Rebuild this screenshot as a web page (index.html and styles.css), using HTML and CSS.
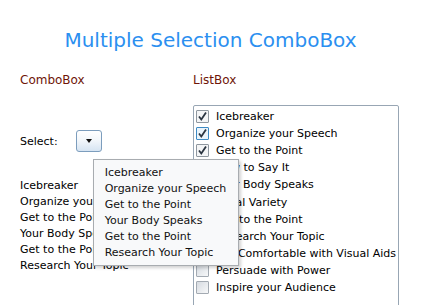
FILE: index.html
```html
<!DOCTYPE html>
<html lang="en">
  <head>
    <meta charset="UTF-8" />
    <title>Multiple Selection ComboBox</title>
    <link rel="stylesheet" href="styles.css">
  </head>
  <body>
    <h1 class="title">Multiple Selection ComboBox</h1>
    <div class="columns">
      <div class="col">
        <div class="label">ComboBox</div>
        <div class="combo-row">
          <span>Select:</span>
          <div class="combo">
            <button class="combo-btn"><span class="arrow"></span></button>
            <ul class="popup">
              <li>Icebreaker</li>
              <li>Organize your Speech</li>
              <li>Get to the Point</li>
              <li>Your Body Speaks</li>
              <li>Get to the Point</li>
              <li>Research Your Topic</li>
            </ul>
          </div>
        </div>
        <ul class="selected">
          <li>Icebreaker</li>
          <li>Organize your Speech</li>
          <li>Get to the Point</li>
          <li>Your Body Speaks</li>
          <li>Get to the Point</li>
          <li>Research Your Topic</li>
        </ul>
      </div>
      <div class="col">
        <div class="label">ListBox</div>
        <ul class="listbox" id="listbox"></ul>
      </div>
    </div>
    <script>
      const items = [
        ["Icebreaker", true],
        ["Organize your Speech", true, true],
        ["Get to the Point", true],
        ["How to Say It", false],
        ["Your Body Speaks", false],
        ["Vocal Variety", false],
        ["Get to the Point", false],
        ["Research Your Topic", false],
        ["Get Comfortable with Visual Aids", false],
        ["Persuade with Power", false],
        ["Inspire your Audience", false],
      ];
      const check =
        '<svg width="11" height="11" viewBox="0 0 11 11"><path d="M2 5.5 L4.3 8.5 L9 1.5" fill="none" stroke="#2a3440" stroke-width="1.8"/></svg>';
      document.getElementById("listbox").innerHTML = items
        .map(
          ([text, on, hover]) => `
          <li>
            <span class="box${on ? " on" : ""}${hover ? " hover" : ""}">${on ? check : ""}</span>
            <span>${text}</span>
          </li>`
        )
        .join("");
    </script>
  </body>
</html>
```

FILE: styles.css
```css
* {
  box-sizing: border-box;
  margin: 0;
  padding: 0;
}
body {
  font-family: "DejaVu Sans", Verdana, sans-serif;
  font-size: 11px;
  color: #000;
  background: #fff;
  overflow: hidden;
}
ul {
  list-style: none;
}
.title {
  font-size: 20px;
  font-weight: normal;
  line-height: 24px;
  color: #2b8ff0;
  text-align: center;
  padding-top: 28px;
}
.columns {
  display: grid;
  grid-template-columns: 173px 206px;
  padding-left: 20px;
  margin-top: 20px;
}
.label {
  font-size: 12px;
  line-height: 17px;
  color: #6f1508;
}
.combo-row {
  display: flex;
  align-items: center;
  gap: 18px;
  margin-top: 41px;
  height: 22px;
}
.combo {
  position: relative;
}
.combo-btn {
  display: flex;
  align-items: center;
  justify-content: center;
  width: 26px;
  height: 22px;
  border: 1px solid #7c9dbd;
  border-radius: 3px;
  background: linear-gradient(#ffffff, #f3f7fb 45%, #d6e4f2);
}
.arrow {
  width: 0;
  height: 0;
  border-left: 3.5px solid transparent;
  border-right: 3.5px solid transparent;
  border-top: 4px solid #111;
}
.popup {
  position: absolute;
  left: 17px;
  top: 29px;
  width: 146px;
  padding: 5px 0 4px 11px;
  background: #f8f9fa;
  border: 1px solid #a8acb0;
  box-shadow: 2px 2px 3px rgba(0, 0, 0, 0.18);
  line-height: 16px;
  color: #111;
  white-space: nowrap;
  z-index: 10;
}
.selected {
  margin-top: 26px;
  line-height: 16px;
}
.listbox {
  margin-top: 16px;
  height: 230px;
  border: 1px solid #98a6b4;
  border-radius: 2px;
  padding: 2px 2px 0;
}
.listbox li {
  display: flex;
  align-items: center;
  gap: 7px;
  height: 17.1px;
  white-space: nowrap;
}
.box {
  display: flex;
  align-items: center;
  justify-content: center;
  width: 13px;
  height: 13px;
  border: 1px solid #a3aab2;
  border-radius: 1px;
  background: linear-gradient(135deg, #d6dbe1, #f7f8f9);
}
.box.on {
  background: #f4f5f6;
  border-color: #8f979f;
}
.box.hover {
  border-color: #3d8ac4;
  background: #eaf4fb;
}
```
